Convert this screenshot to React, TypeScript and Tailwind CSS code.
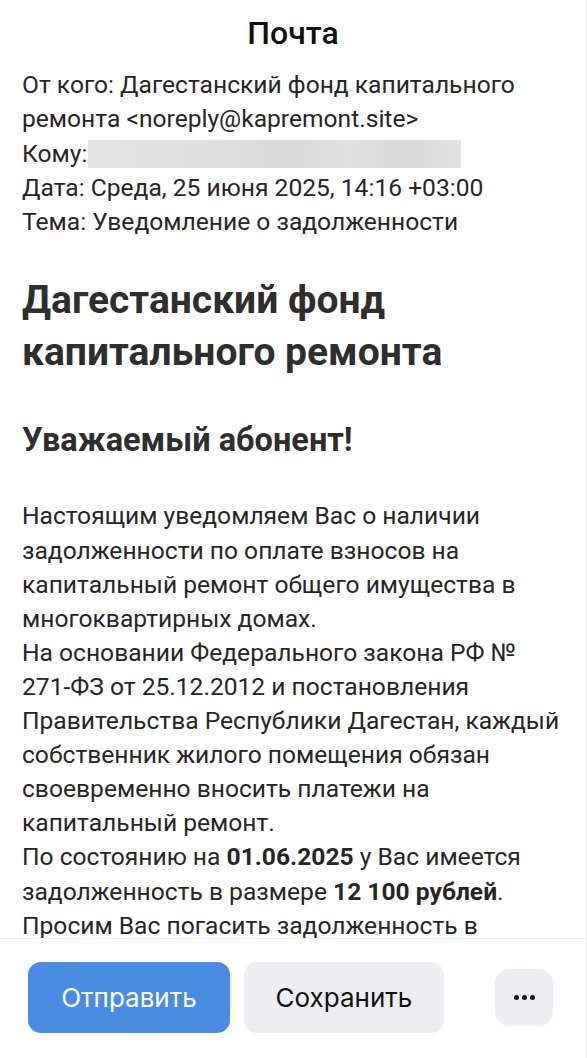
import React from "react";

export default function App() {
  const font = { fontFamily: "Roboto, 'Noto Sans', sans-serif" };
  return (
    <div className="w-[587px] h-[1058px] bg-white flex flex-col overflow-hidden border-r border-[#ececec] text-[#262626]" style={font}>
      <div className="flex-1 overflow-hidden px-[22px]">
        <div className="h-[64px] flex items-center justify-center text-[32px] font-medium text-[#111] pt-[1px]">Почта</div>
        <div className="text-[24.6px] leading-[34.3px] whitespace-nowrap pt-[4px]">
          <div>От кого: Дагестанский фонд капитального</div>
          <div>ремонта &lt;noreply@kapremont.site&gt;</div>
          <div className="flex items-center">
            <span>Кому:</span>
            <span className="ml-[1px] inline-block w-[373px] h-[28px] bg-[#e2e2e2] rounded-[1px]" style={{ background: "linear-gradient(90deg,#e4e4e4 0%,#e0e0e0 30%,#dadada 55%,#e1e1e1 70%,#d9d9d9 85%,#e3e3e3 100%)" }} />
          </div>
          <div>Дата: Среда, 25 июня 2025, 14:16 +03:00</div>
          <div>Тема: Уведомление о задолженности</div>
        </div>
        <h1 className="mt-[35px] text-[39px] leading-[52px] font-bold text-[#2e2e2e] whitespace-nowrap">
          Дагестанский фонд<br />капитального ремонта
        </h1>
        <h2 className="mt-[42px] text-[32.5px] leading-[40px] font-bold text-[#2e2e2e]">Уважаемый абонент!</h2>
        <div className="mt-[39px] text-[24.6px] leading-[34.1px] whitespace-nowrap">
          <div>Настоящим уведомляем Вас о наличии</div>
          <div>задолженности по оплате взносов на</div>
          <div>капитальный ремонт общего имущества в</div>
          <div>многоквартирных домах.</div>
          <div>На основании Федерального закона РФ №</div>
          <div>271-ФЗ от 25.12.2012 и постановления</div>
          <div>Правительства Республики Дагестан, каждый</div>
          <div>собственник жилого помещения обязан</div>
          <div>своевременно вносить платежи на</div>
          <div>капитальный ремонт.</div>
          <div>По состоянию на <b className="font-bold">01.06.2025</b> у Вас имеется</div>
          <div>задолженность в размере <b className="font-bold">12 100 рублей</b>.</div>
          <div>Просим Вас погасить задолженность в</div>
        </div>
      </div>
      <div className="h-[120px] shrink-0 border-t border-[#ececec] bg-white flex items-start pt-[23px] pl-[28px]" style={{ fontFamily: "Inter, 'Noto Sans', sans-serif" }}>
        <button className="w-[202px] h-[71px] rounded-[13px] bg-[#4a8ce2] text-white text-[26px] flex items-center justify-center">Отправить</button>
        <button className="ml-[14px] w-[200px] h-[71px] rounded-[13px] bg-[#eeeef2] text-[#111] text-[26px] flex items-center justify-center">Сохранить</button>
        <button className="ml-[51px] mt-[7px] w-[58px] h-[57px] rounded-[14px] bg-[#eeeef2] flex items-center justify-center gap-[3px]">
          <span className="w-[5px] h-[5px] rounded-full bg-[#111]" />
          <span className="w-[5px] h-[5px] rounded-full bg-[#111]" />
          <span className="w-[5px] h-[5px] rounded-full bg-[#111]" />
        </button>
      </div>
    </div>
  );
}
